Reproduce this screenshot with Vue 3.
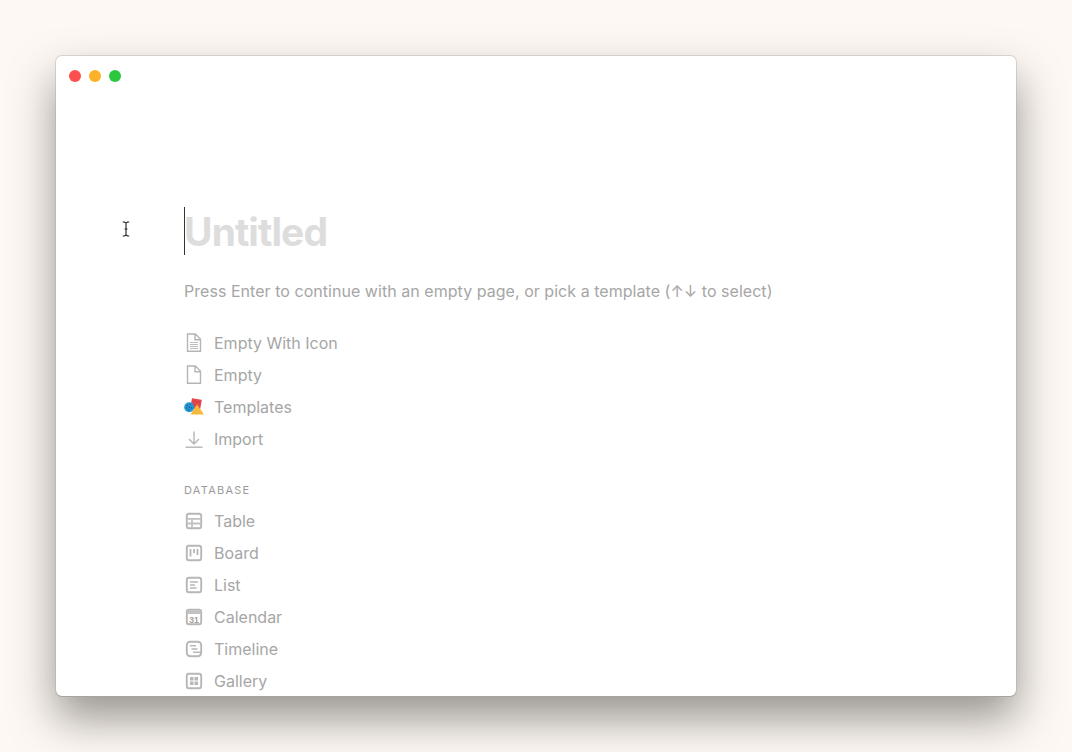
<script setup>
const first = [
  { label: 'Empty With Icon', icon: 'doc' },
  { label: 'Empty', icon: 'blank' },
  { label: 'Templates', icon: 'templates' },
  { label: 'Import', icon: 'import' },
]
const db = [
  { label: 'Table', icon: 'table' },
  { label: 'Board', icon: 'board' },
  { label: 'List', icon: 'list' },
  { label: 'Calendar', icon: 'calendar' },
  { label: 'Timeline', icon: 'timeline' },
  { label: 'Gallery', icon: 'gallery' },
]
</script>

<template>
  <div class="stage">
    <main class="window">
      <header class="titlebar">
        <span class="dot red"></span>
        <span class="dot yellow"></span>
        <span class="dot green"></span>
      </header>

      <svg class="ibeam" width="8" height="16" viewBox="0 0 8 16" fill="none" stroke="#1c1c1c" stroke-width="1.1">
        <path d="M.8 1h1.7L4 2.200 5.500 1h1.700M4 2.200v11.600M.8 15h1.700L4 13.800 5.500 15h1.700M2.600 8h2.800" />
      </svg>

      <section class="content">
        <div class="title-row">
          <span class="caret"></span>
          <h1 class="title">Untitled</h1>
        </div>
        <p class="hint">Press Enter to continue with an empty page, or pick a template (↑↓ to select)</p>

        <ul class="menu">
          <li v-for="item in first" :key="item.label" class="row">
            <svg class="icon" width="20" height="20" viewBox="0 0 20 20" fill="none" stroke="#b5b5b3" stroke-width="1.4">
              <template v-if="item.icon === 'doc'">
                <path d="M3.500 1h8l5 5.200v12H3.500zM11 1v5.700h5.500" />
                <path d="M6 9.500h8M6 11.500h8M6 13.500h8M6 15.500h8" stroke-width="0.9" />
              </template>
              <path v-else-if="item.icon === 'blank'" d="M3.500 1h8l5 5.200v12H3.500zM11 1v5.700h5.500" />
              <template v-else-if="item.icon === 'templates'">
                <rect x="7" y="2" width="10" height="10" rx="0.5" transform="rotate(10 12 7)" fill="#e5484f" stroke="none" />
                <g fill="#b3303a" stroke="none">
                  <circle cx="10" cy="4" r="0.6" /><circle cx="13" cy="4.600" r="0.6" /><circle cx="15.600" cy="5" r="0.6" />
                  <circle cx="10" cy="7" r="0.6" />
                </g>
                <circle cx="5.200" cy="10.200" r="5" fill="#1e9bd0" stroke="none" />
                <g fill="#3a3f9e" stroke="none">
                  <circle cx="3.400" cy="8.400" r="0.7" /><circle cx="6" cy="7.600" r="0.7" />
                  <circle cx="2.800" cy="11" r="0.7" /><circle cx="5.400" cy="10.200" r="0.7" />
                  <circle cx="7.600" cy="11" r="0.7" /><circle cx="4.800" cy="13" r="0.7" />
                </g>
                <path d="M13 7.400 20 17.400H6.500z" fill="#f6b93b" stroke="none" />
              </template>
              <template v-else>
                <path d="M10 2.500v12.500M5 10l5 5 5-5" />
                <path d="M1.500 18.200h17" />
              </template>
            </svg>
            <span>{{ item.label }}</span>
          </li>
        </ul>

        <h2 class="section">DATABASE</h2>

        <ul class="menu">
          <li v-for="item in db" :key="item.label" class="row">
            <svg class="icon" width="20" height="20" viewBox="0 0 20 20" fill="none" stroke="#b7b7b5" stroke-width="1.9">
              <template v-if="item.icon === 'timeline'">
                <rect x="2.800" y="2.800" width="14.400" height="14.400" rx="3.400" />
                <path d="M6 6.800h6M7.500 10h6M9 13.200h9" stroke-width="1.600" />
              </template>
              <template v-else>
                <rect x="2.800" y="2.800" width="14.400" height="14.400" rx="2" />
                <path v-if="item.icon === 'table'" d="M3 7.800h14M3 12.500h14M8 7.800V17" stroke-width="1.800" stroke="#c2c2c0" />
                <path v-else-if="item.icon === 'board'" d="M6.500 6v7.500M10 6v4M13.500 6v6" stroke-width="1.800" />
                <path v-else-if="item.icon === 'list'" d="M6 7h8M6 10h5M6 13h6.500" stroke-width="1.600" />
                <template v-else-if="item.icon === 'calendar'">
                  <path d="M3 3.500h14v3.500H3z" fill="#c2c2c0" stroke="none" />
                  <text x="10" y="15.500" text-anchor="middle" class="cal" stroke="none">31</text>
                </template>
                <path v-else d="M6 6h3.500v3.500H6zM10.500 6H14v3.500h-3.500zM6 10.500h3.500V14H6zM10.500 10.500H14V14h-3.500z" fill="#b7b7b5" stroke="none" />
              </template>
            </svg>
            <span>{{ item.label }}</span>
          </li>
        </ul>
      </section>
    </main>
  </div>
</template>

<style>
html, body { margin: 0; background: #fdf8f4; }
</style>

<style scoped>
.stage {
  position: relative;
  width: 1072px;
  height: 752px;
  box-sizing: border-box;
  padding: 56px;
  background: #fdf8f4;
  overflow: hidden;
  font-family: Inter, "Liberation Sans", sans-serif;
}
.stage::before {
  content: "";
  position: absolute;
  left: 56px;
  top: 56px;
  width: 960px;
  height: 640px;
  border-radius: 6px;
  box-shadow: 0 22px 44px rgba(50, 45, 40, 0.5);
}
.window {
  position: relative;
  width: 960px;
  height: 640px;
  background: #fff;
  border-radius: 6px;
  overflow: hidden;
  box-shadow: 0 0 0 1px rgba(165, 160, 155, 0.35), 0 1px 0 0 #a8a5a2;
}
.titlebar {
  display: flex;
  gap: 8px;
  padding: 13.500px 0 0 13px;
  height: 40px;
  box-sizing: border-box;
}
.dot { width: 12px; height: 12px; border-radius: 50%; }
.red { background: #fd4f4e; }
.yellow { background: #fbb228; }
.green { background: #2ac73f; }
.ibeam { position: absolute; left: 66px; top: 165px; }
.content { padding: 112px 0 0 128px; }
.title-row { display: flex; align-items: center; height: 48px; position: relative; }
.caret { position: absolute; left: 0; top: -1px; width: 1px; height: 48px; background: #37352f; }
.title {
  margin: 0;
  font-size: 39px;
  line-height: 48px;
  font-weight: 700;
  letter-spacing: -0.92px;
  color: #dddddd;
}
.hint {
  margin: 23px 0 0;
  font-size: 16px;
  line-height: 24px;
  color: #a6a6a6;
  letter-spacing: 0.04px;
  white-space: nowrap;
}
.menu { list-style: none; margin: 0; padding: 0; }
.hint + .menu { margin-top: 24px; }
.row {
  display: flex;
  align-items: center;
  height: 32px;
  gap: 10px;
  font-size: 16px;
  color: #a6a6a6;
}
.icon { flex: none; width: 20px; height: 20px; }
.section {
  margin: 27px 0 0;
  height: 23px;
  font-size: 11px;
  line-height: 16px;
  font-weight: 400;
  letter-spacing: 1.250px;
  color: #9b9b9b;
}
.cal { font: 700 8.500px "Liberation Sans", sans-serif; fill: #a0a09e; }
</style>
